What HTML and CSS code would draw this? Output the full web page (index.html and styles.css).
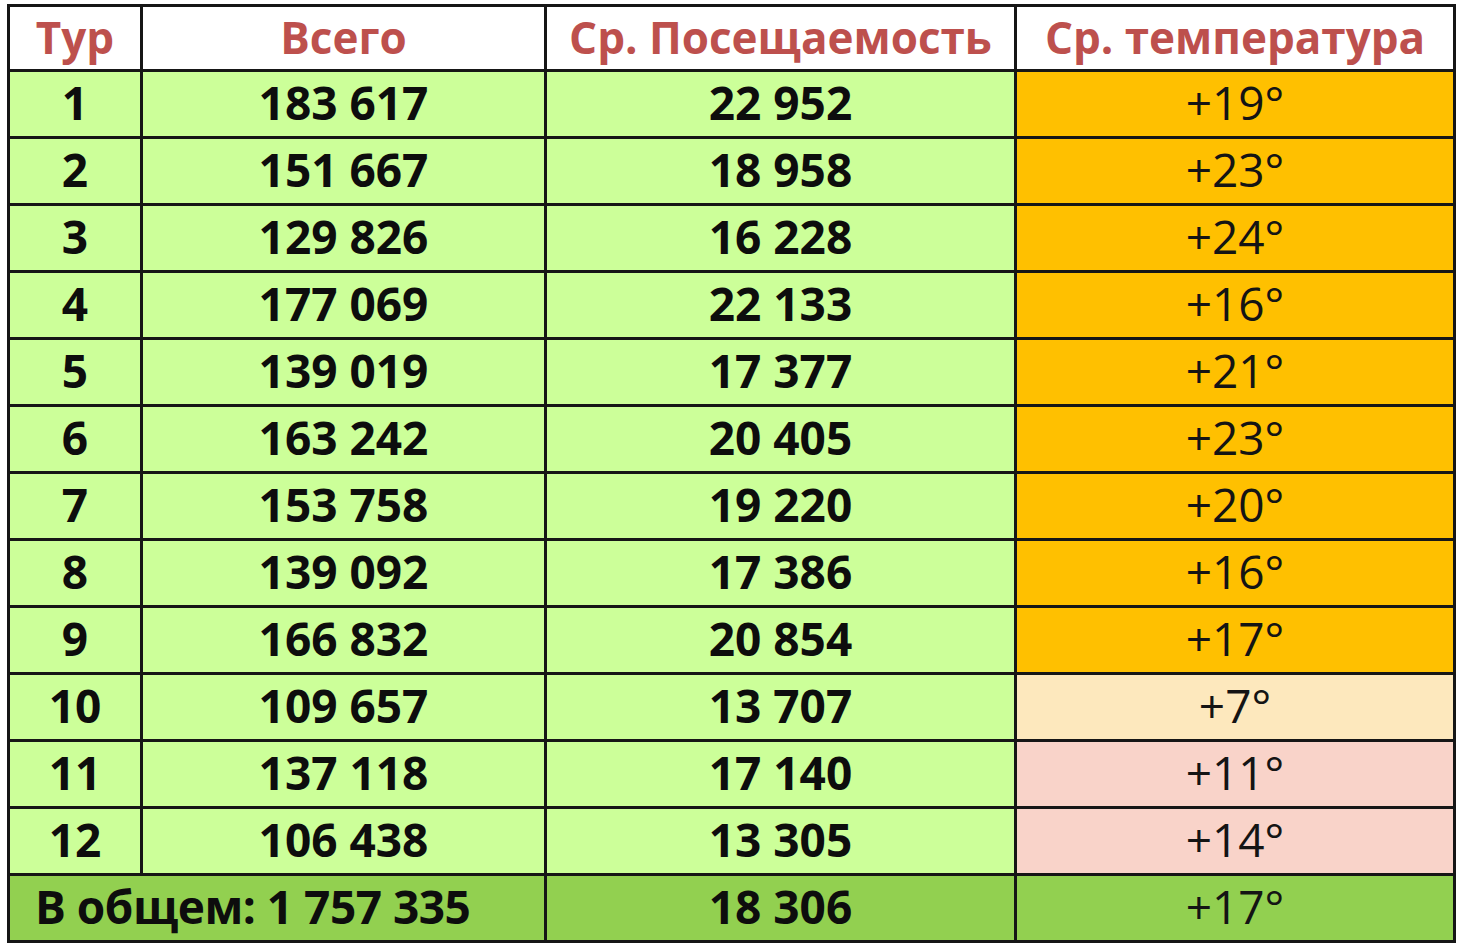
FILE: index.html
```html
<!DOCTYPE html>
<html lang="ru">
<head>
<meta charset="utf-8">
<title>Посещаемость по турам</title>
<link rel="stylesheet" href="styles.css">
</head>
<body>
<div class="page">
  <div class="grid">
    <div class="cell head">Тур</div>
    <div class="cell head">Всего</div>
    <div class="cell head">Ср. Посещаемость</div>
    <div class="cell head">Ср. температура</div>

    <div class="cell num">1</div><div class="cell num">183 617</div><div class="cell num">22 952</div><div class="cell temp warm">+19°</div>
    <div class="cell num">2</div><div class="cell num">151 667</div><div class="cell num">18 958</div><div class="cell temp warm">+23°</div>
    <div class="cell num">3</div><div class="cell num">129 826</div><div class="cell num">16 228</div><div class="cell temp warm">+24°</div>
    <div class="cell num">4</div><div class="cell num">177 069</div><div class="cell num">22 133</div><div class="cell temp warm">+16°</div>
    <div class="cell num">5</div><div class="cell num">139 019</div><div class="cell num">17 377</div><div class="cell temp warm">+21°</div>
    <div class="cell num">6</div><div class="cell num">163 242</div><div class="cell num">20 405</div><div class="cell temp warm">+23°</div>
    <div class="cell num">7</div><div class="cell num">153 758</div><div class="cell num">19 220</div><div class="cell temp warm">+20°</div>
    <div class="cell num">8</div><div class="cell num">139 092</div><div class="cell num">17 386</div><div class="cell temp warm">+16°</div>
    <div class="cell num">9</div><div class="cell num">166 832</div><div class="cell num">20 854</div><div class="cell temp warm">+17°</div>
    <div class="cell num">10</div><div class="cell num">109 657</div><div class="cell num">13 707</div><div class="cell temp cool">+7°</div>
    <div class="cell num">11</div><div class="cell num">137 118</div><div class="cell num">17 140</div><div class="cell temp mild">+11°</div>
    <div class="cell num">12</div><div class="cell num">106 438</div><div class="cell num">13 305</div><div class="cell temp mild">+14°</div>

    <div class="cell total total-label">В общем: 1 757 335</div>
    <div class="cell total num-total">18 306</div>
    <div class="cell total temp">+17°</div>
  </div>
</div>
</body>
</html>
```

FILE: styles.css
```css
html, body {
  margin: 0;
  padding: 0;
  background: #ffffff;
}

.page {
  padding: 4px 0 0 7px;
}

.grid {
  display: grid;
  width: 1449px;
  box-sizing: border-box;
  grid-template-columns: 130px 401px 467px 436px;
  grid-template-rows: 62px repeat(13, 64px);
  gap: 3px;
  padding: 3px;
  background: #161616;
  font-family: "Open Sans", "Liberation Sans", sans-serif;
  font-size: 46px;
}

.cell {
  display: flex;
  align-items: center;
  justify-content: center;
  padding-bottom: 5px;
  box-sizing: border-box;
  background: #ccff99;
  color: #0d0d0d;
  font-weight: 700;
  white-space: nowrap;
  line-height: 1;
}

.head {
  background: #ffffff;
  color: #bd504d;
  font-size: 44px;
  padding-bottom: 2px;
}

.temp {
  font-weight: 400;
  color: #141414;
}

.warm { background: #ffc000; }
.cool { background: #fde8bd; }
.mild { background: #f9d3c9; }

.total {
  background: #92d050;
}

.total-label {
  grid-column: span 2;
  justify-content: flex-start;
  padding-left: 25px;
  letter-spacing: -0.5px;
}
```
